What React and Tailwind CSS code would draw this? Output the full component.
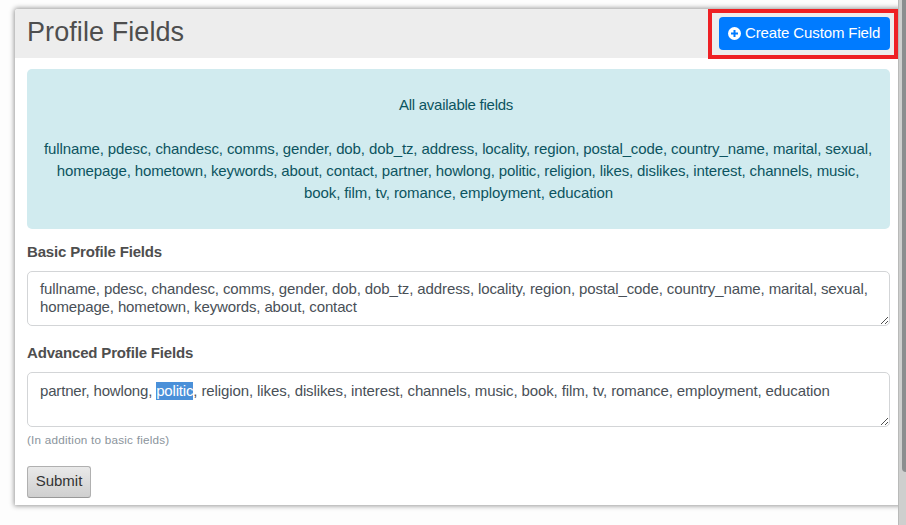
const basic =
  'fullname, pdesc, chandesc, comms, gender, dob, dob_tz, address, locality, region, postal_code, country_name, marital, sexual,';

function PlusCircle() {
  return (
    <svg width="13" height="13" viewBox="0 0 13 13">
      <circle cx="6.5" cy="6.5" r="6.5" fill="#fff" />
      <path d="M6.5 3v7M3 6.5h7" stroke="#007bff" strokeWidth="2" />
    </svg>
  );
}

function FieldBox({ children }) {
  return (
    <div className="relative h-[55px] rounded-[5px] border border-[#d3d5d7] bg-white px-3 pt-2 leading-[18px] text-[#495057] whitespace-nowrap">
      {children}
      <svg className="absolute right-0 bottom-px" width="8" height="8" viewBox="0 0 8 8" fill="#505050" shapeRendering="crispEdges">
        {[0, 1, 2, 3, 4, 5, 6].map((i) => (
          <rect key={i} x={i} y={7 - i} width="1" height="1" />
        ))}
        {[4, 5, 6].map((i) => (
          <rect key={i} x={i} y={11 - i} width="1" height="1" />
        ))}
      </svg>
    </div>
  );
}

export default function App() {
  return (
    <div className="relative h-[525px] w-[906px] overflow-hidden bg-[#fdfdfd] pt-[9px] pl-[15px] font-['Liberation_Sans',Arial,sans-serif] text-[15px] text-[#4e4e4e]">
      <main className="h-[496px] w-[887px] rounded-t-[3px] bg-white shadow-[0_0_5px_1px_rgba(0,0,0,0.4)]">
        <header className="flex h-[49px] items-start justify-between rounded-t-[3px] bg-[#ededed] px-3">
          <h1 className="pt-[7px] text-[27px] leading-8 tracking-[0.08px]">Profile Fields</h1>
          <button className="mt-2 flex h-[33px] w-[171px] items-center gap-1 rounded bg-[#007bff] pl-[9px] tracking-[-0.12px] text-white whitespace-nowrap">
            <PlusCircle />
            <span>Create Custom Field</span>
          </button>
        </header>
        <section className="mx-3 pt-[11px]">
          <div className="h-[160px] rounded-[5px] bg-[#d1ebef] pt-[25px] text-center leading-[22px] text-[#0c5460] whitespace-nowrap">
            <p className="pr-[5px] tracking-[-0.25px]">All available fields</p>
            <p className="pt-[22px] pr-px tracking-[-0.11px]">{basic}</p>
            <p className="pr-px tracking-[-0.13px]">homepage, hometown, keywords, about, contact, partner, howlong, politic, religion, likes, dislikes, interest, channels, music,</p>
            <p className="tracking-[-0.09px]">book, film, tv, romance, employment, education</p>
          </div>
          <h2 className="mt-3 mb-2 leading-[22px] font-bold tracking-[-0.17px]">Basic Profile Fields</h2>
          <FieldBox>
            <p className="tracking-[-0.113px]">{basic}</p>
            <p className="tracking-[-0.135px]">homepage, hometown, keywords, about, contact</p>
          </FieldBox>
          <h2 className="mt-4 mb-2 leading-[22px] font-bold tracking-[-0.17px]">Advanced Profile Fields</h2>
          <FieldBox>
            <p className="pt-px">
              <span className="tracking-[-0.17px]">partner, howlong, </span>
              <span className="inline-block h-[18px] bg-[#4a90d9] leading-[18px] tracking-[-0.17px] text-white">politic</span>
              <span className="tracking-[-0.11px]">, religion, likes, dislikes, interest, channels, music, book, film, tv, romance, employment, education</span>
            </p>
          </FieldBox>
          <p className="mt-1 text-[11.7px] leading-[18px] tracking-[0.23px] text-[#8b949c]">(In addition to basic fields)</p>
          <button className="mt-[17px] h-8 w-16 rounded-[3px] border border-[#b0b0b0] border-b-[#999] bg-linear-to-b from-[#e9e9e9] to-[#cfcfcf] pb-px text-[#333]">Submit</button>
        </section>
      </main>
      <div className="absolute top-0 left-[898px] h-[525px] w-2 border-l border-[#b9bab9] bg-[#cecfce]">
        <div className="ml-[3px] h-[472px] w-1 rounded-bl-sm bg-[#8b8e8f]" />
      </div>
      <div className="absolute top-[9px] left-[708px] h-[50px] w-[190px] border-4 border-[#ee2024]" />
    </div>
  );
}
